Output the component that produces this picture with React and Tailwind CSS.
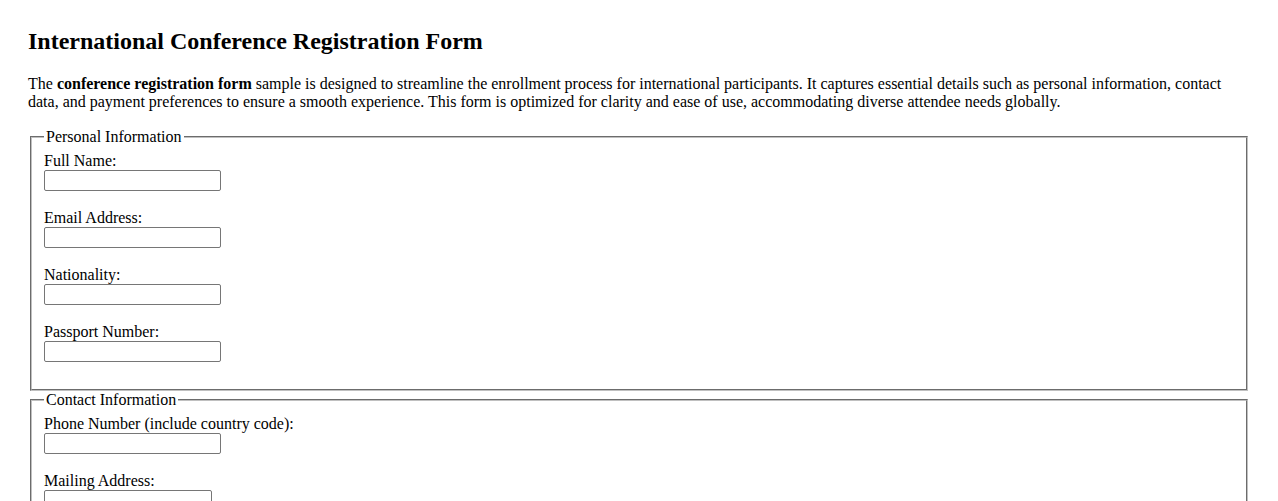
import React from 'react';

const Field = ({ label, id, type = 'text' }) => (
  <div className="mb-[18px]">
    <label htmlFor={id} className="block h-[18px] leading-[18px]">
      {label}
    </label>
    <input
      id={id}
      type={type}
      className="block w-[177px] h-[21px] bg-white border border-[#767676] rounded-[2px] px-[2px] text-[13px]"
    />
  </div>
);

const Section = ({ title, children }) => (
  <fieldset className="mx-[2px] border-2 [border-style:groove] border-[#c0c0c0] px-[12px] pt-[6px] pb-[9px]">
    <legend className="px-[2px] leading-[18px]">{title}</legend>
    {children}
  </fieldset>
);

const App = () => {
  return (
    <div
      className="px-[28px] pt-[27px] pb-8 bg-white text-black text-[16px] leading-[18px]"
      style={{ fontFamily: '"Liberation Serif", "Times New Roman", serif' }}
    >
      <h2 className="text-[24px] leading-[28px] font-bold">International Conference Registration Form</h2>

      <p className="mt-[20px] mb-[17px]">
        The <strong>conference registration form</strong> sample is designed to streamline the enrollment process for
        international participants. It captures essential details such as personal information, contact data, and
        payment preferences to ensure a smooth experience. This form is optimized for clarity and ease of use,
        accommodating diverse attendee needs globally.
      </p>

      <form>
        {/* Personal details */}
        <Section title="Personal Information">
          <Field label="Full Name:" id="fullName" />
          <Field label="Email Address:" id="email" type="email" />
          <Field label="Nationality:" id="nationality" />
          <Field label="Passport Number:" id="passport" />
        </Section>

        {/* Contact details */}
        <Section title="Contact Information">
          <Field label="Phone Number (include country code):" id="phone" type="tel" />
          <div className="mb-[18px]">
            <label htmlFor="address" className="block h-[18px] leading-[18px]">
              Mailing Address:
            </label>
            <textarea
              id="address"
              rows={2}
              className="block w-[168px] h-[36px] bg-white border border-[#767676] rounded-[2px] text-[13px]"
            />
          </div>
        </Section>

        {/* Payment */}
        <Section title="Payment Preferences">
          <Field label="Cardholder Name:" id="cardName" />
          <Field label="Card Number:" id="cardNumber" />
        </Section>
      </form>
    </div>
  );
};

export default App;
